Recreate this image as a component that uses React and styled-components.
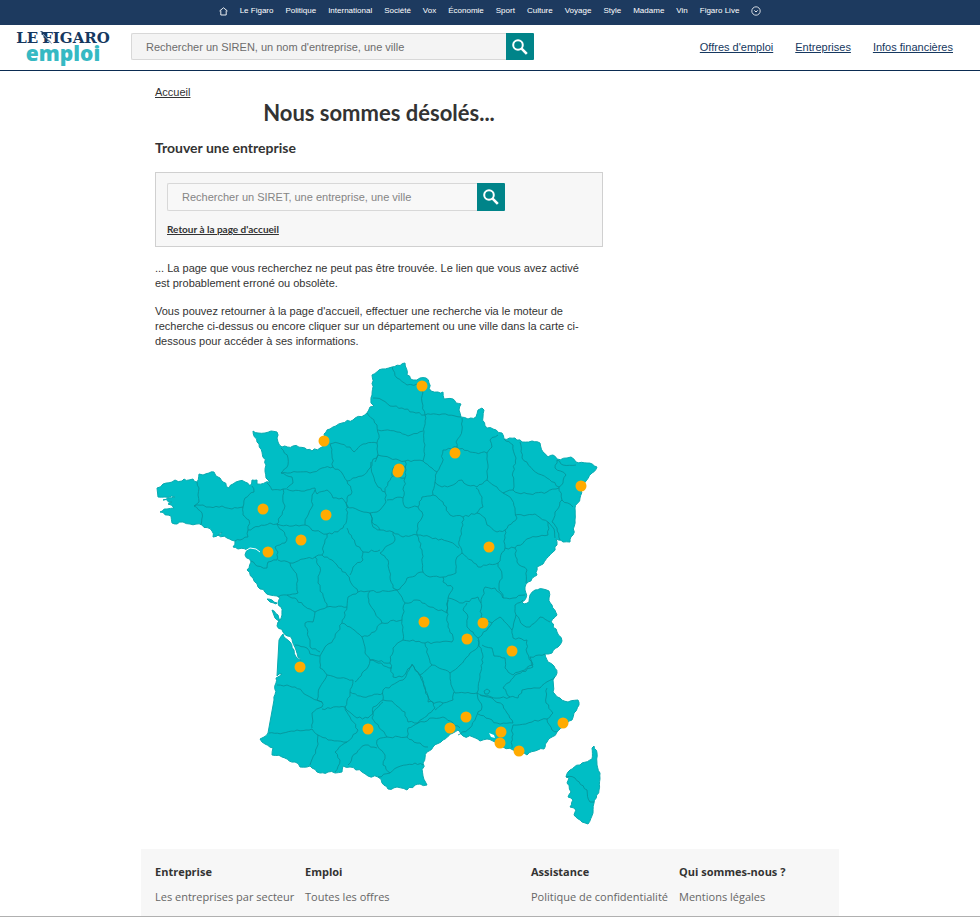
import React, { useState } from "react";
import styled, { createGlobalStyle } from "styled-components";

const GlobalStyle = createGlobalStyle`
  * {
    box-sizing: border-box;
  }

  body {
    margin: 0;
    background: #fff;
    color: #333;
    font-family: "Liberation Sans", Arial, sans-serif;
    font-size: 11px;
    line-height: 15px;
  }

  a {
    color: inherit;
  }
`;

const topLinks = [
  "Le Figaro",
  "Politique",
  "International",
  "Société",
  "Vox",
  "Économie",
  "Sport",
  "Culture",
  "Voyage",
  "Style",
  "Madame",
  "Vin",
  "Figaro Live",
];

const mainLinks = ["Offres d'emploi", "Entreprises", "Infos financières"];

const footerColumns = [
  { title: "Entreprise", link: "Les entreprises par secteur" },
  { title: "Emploi", link: "Toutes les offres" },
  { title: "Assistance", link: "Politique de confidentialité" },
  { title: "Qui sommes-nous ?", link: "Mentions légales" },
];

const mainland =
  "157,488 163,484 172,482 175,480 182,481 184,479 189,480 193,479 197,482 199,474 203,475 209,473 214,472 216,476 220,478 223,482 229,488 233,484 239,481 245,482 250,486 252,480 257,480 257,484 270,482 266,478 266,465 262,452 257,442 253,431 258,433 265,433 271,431 277,432 277,438 278,442 282,447 293,446 305,448 312,451 320,448 324,446 324,434 330,429 342,423 353,420 367,413 370,407 374,406 371,403 372,395 372,375 382,369 392,367 405,363 407,375 413,380 420,378 426,378 429,383 431,391 438,392 443,392 444,399 453,399 456,403 461,404 459,410 461,417 468,419 476,417 478,410 482,408 484,410 483,417 485,426 493,429 502,433 504,439 515,438 522,442 532,441 540,443 543,452 548,457 553,455 557,459 567,458 571,457 576,462 587,463 597,467 592,473 586,481 581,490 580,498 575,508 575,520 573,535 570,542 563,542 556,539 557,545 553,552 543,564 537,567 537,575 528,582 525,590 526,598 522,602 524,604 529,602 530,595 535,590 543,589 549,591 549,598 552,605 557,615 551,622 557,632 562,641 558,647 552,653 545,654 548,662 554,666 557,673 553,680 553,692 560,698 568,702 578,700 579,705 574,713 572,720 563,727 557,732 552,737 547,742 544,749 535,751 527,755 521,753 513,750 503,747 495,742 487,739 480,741 473,737 463,736 458,730 453,733 443,740 433,747 427,752 423,763 423,776 427,785 420,784 415,785 407,790 397,787 388,789 382,783 378,777 368,776 362,772 350,767 343,766 342,772 335,773 328,772 320,773 310,766 300,767 295,762 282,757 272,755 273,748 265,744 260,739 264,737 268,733 274,700 276,683 276,678 282,674 277,676 279,640 283,634 290,642 294,650 296,657 301,661 298,657 296,650 292,639 283,632 277,626 278,622 282,615 281,607 278,603 280,598 270,595 258,587 253,578 247,570 251,562 245,555 247,550 238,549 233,547 235,541 227,538 218,535 222,532 213,537 212,531 202,525 190,524 183,522 177,524 172,523 171,516 160,512 167,509 174,508 168,504 172,502 163,500 168,498 175,497 165,497 158,497";

const islands = [
  "594,746 597,753 597,765 600,773 599,790 594,803 593,813 588,824 582,822 574,815 576,810 570,807 573,800 568,797 571,792 567,783 569,778 566,777 570,770 582,763 592,759 592,748",
  "267,599 272,600 277,603 276,604 270,602",
  "272,610 278,615 280,621 275,618",
];

const borders = [
  "197,482 199,488 198,495 199,502 194,506 202,513 201,525",
  "194,506 203,505 210,507 222,506 232,509 243,507",
  "252,486 254,492 245,498 243,507 243,515 249,520 248,530 248,537 240,540 235,541",
  "267,483 272,490 283,489 283,502 285,506 280,517 277,524",
  "248,530 253,528 270,523 277,524 282,530 287,538 285,543 275,547 278,552 277,560 268,562 267,568 257,566 251,561",
  "277,524 293,526 305,525 315,531 327,534",
  "315,490 312,498 313,505 307,517 305,525",
  "283,489 293,491 307,490 315,488 317,494 327,490 333,498 342,498 347,507",
  "281,448 288,458 288,465 281,473 292,477 293,483 287,488",
  "281,473 297,472 310,473 322,468 333,467",
  "330,444 332,455 333,467 342,473 347,481 362,476 370,468 372,462 378,455",
  "330,444 338,443 350,447 354,452 363,444 377,443",
  "367,413 377,425 379,435 377,443 378,455 375,462",
  "347,481 352,492 347,498 347,518 343,528 332,534 327,534",
  "347,507 358,510 370,513",
  "371,462 373,475 378,487 385,492 386,502 380,510 370,513",
  "385,492 388,482 393,476 405,478 403,498 395,498 387,500",
  "378,455 390,458 405,461 406,470 405,478",
  "392,476 393,468 399,464 406,468",
  "405,461 423,461",
  "378,430 397,432 408,436 423,431",
  "373,398 382,400 390,406 402,408 413,412 425,415",
  "392,367 397,378 407,385 417,384 423,392 422,402 425,415",
  "425,415 442,414 455,416 461,417",
  "425,415 424,432 425,445 423,461 432,468 437,472",
  "462,418 462,430 456,442 457,447 443,450 442,463 437,472 435,482 442,487",
  "457,447 470,452 487,453",
  "498,435 490,440 492,447 487,453 488,465 487,480",
  "442,487 450,486 462,480 467,485 477,487 487,480 497,487 503,493 513,490",
  "504,439 513,445 516,458 513,472 513,490",
  "520,442 522,458 533,470 547,478 559,487",
  "513,490 518,493 530,494 547,492 559,488",
  "557,460 563,465 576,465",
  "557,460 555,468 566,475 563,483 559,487 562,500 573,507",
  "562,500 555,512 552,522 557,528 560,540",
  "403,498 405,507 418,507 422,497 433,495 435,482",
  "433,495 443,502 450,515 463,517 477,513 483,507 482,497 476,488",
  "503,493 512,500 515,508 517,518 505,530 497,532 487,525 485,518 477,513",
  "515,515 527,515 535,514 548,522 554,529 555,538",
  "505,530 505,538 505,548 515,548 530,538 548,535 548,522",
  "463,517 463,525 460,537 459,545 462,553 478,567 498,563 505,548",
  "418,507 423,515 418,523 417,535 430,537 450,542 459,548",
  "370,513 372,522 380,530 393,532 403,537 417,535",
  "393,532 395,540 380,553 388,560 390,577 393,588 397,590",
  "417,535 422,550 423,572 430,577 443,577 456,573 457,557 462,553",
  "423,572 407,578 403,585 397,590 380,592 370,591",
  "397,590 405,603 417,600 430,607 447,613 448,598 453,588 443,582 443,577",
  "448,598 463,603 478,597 481,603 485,587 495,588 503,598 513,598 525,595",
  "481,603 481,617 492,623 482,635 478,638",
  "498,563 502,575 499,587 503,598",
  "515,548 517,562 527,570 526,583",
  "448,600 447,617 448,627 453,637 452,642",
  "467,603 463,610 468,617 467,627 473,632 478,638 478,647",
  "492,623 500,617 512,630 516,615 515,605 523,600",
  "516,615 523,625 530,627 540,617 550,622",
  "512,630 513,638 527,640 527,653 533,665 513,675 505,668 505,658 494,656 492,648 482,645",
  "405,603 402,620 403,627 403,640 413,640 425,643 437,642 452,642",
  "370,591 368,597 370,605 382,623 402,620",
  "382,623 370,635 362,637",
  "403,640 393,648 390,663 393,677 402,677 412,664 420,675 432,665 428,655 425,643",
  "362,637 365,653 370,660 390,663",
  "432,665 450,673 460,665 470,653 478,647",
  "478,640 483,657 480,677 477,693",
  "450,673 452,687 455,693 465,693 477,693",
  "420,675 425,687 428,702 443,703 453,700 454,692",
  "383,690 403,680 412,665 422,677 427,693 435,708 418,723 408,722 405,712 392,701 383,700 383,690",
  "383,700 373,707 372,718 387,737 407,737 408,728 418,723",
  "387,737 377,740 378,747 385,755 383,765 390,773 398,767 415,763 423,765",
  "378,777 390,773",
  "407,737 417,743 428,747",
  "418,723 433,718 443,717 460,728",
  "435,710 443,703",
  "477,693 482,707 477,715 470,728 458,735",
  "480,695 492,698 503,705 507,713 513,723 497,723 478,714",
  "477,693 485,696 500,698 510,697 503,688 515,675",
  "510,697 518,698 522,690 540,688 555,677",
  "515,675 533,667 530,657 545,654",
  "547,688 546,703 553,713 547,719 532,722 513,725 512,737 512,748",
  "547,719 552,730 557,732",
  "277,685 287,685 295,687 312,698 322,702",
  "295,645 307,648 310,654 320,656 320,668 327,675 320,687 317,700 322,702 322,707 312,713 312,728",
  "269,733 283,733 297,730 312,729 318,735 317,747 310,765",
  "318,735 328,740 347,742 335,752 340,760 335,772",
  "322,709 345,707 350,717 358,730 347,742",
  "327,675 337,678 353,680 350,693 345,707",
  "350,692 363,697 383,693",
  "345,707 357,718 368,718 383,702",
  "355,682 368,667 370,660 392,668",
  "348,765 352,757 365,745 377,748",
  "320,656 325,647 333,640 342,623 347,607",
  "278,560 290,563 297,577 298,593 287,595 278,597",
  "290,563 315,557 320,567 318,583 327,607",
  "287,595 295,598 303,605 315,612 327,607",
  "327,534 322,555 315,557",
  "322,555 332,560 337,565 347,575 358,592 348,597 347,607 333,607 327,607",
  "315,612 313,622 305,623 310,640 310,647 320,652",
  "342,623 350,627 362,637",
  "358,592 370,591",
  "347,528 355,543 363,552 363,560 353,567 350,575",
  "363,552 380,550",
  "370,513 373,527 380,530",
  "484,691 487,689 490,691 488,694 485,694 484,691",
  "566,777 575,778 587,790 590,802 594,802",
];

const towns = [
  [422, 386],
  [324, 441],
  [399, 469],
  [398, 472],
  [455, 453],
  [581, 486],
  [263, 509],
  [326, 515],
  [301, 540],
  [268, 552],
  [489, 547],
  [424, 622],
  [483, 623],
  [467, 639],
  [512, 651],
  [300, 667],
  [368, 729],
  [450, 728],
  [466, 717],
  [501, 732],
  [500, 743],
  [519, 751],
  [563, 723],
];

// small zigzag between two points, long straight coasts stay smooth
const roughen = (list, size) => {
  const pts = list.split(" ").map((p) => p.split(",").map(Number));
  let d = "M" + pts[0];
  for (let i = 1; i < pts.length; i++) {
    const [x1, y1] = pts[i - 1];
    const [x2, y2] = pts[i];
    const len = Math.hypot(x2 - x1, y2 - y1);
    const steps = len > 30 ? 1 : Math.max(1, Math.round(len / 3));
    for (let s = 1; s <= steps; s++) {
      const t = s / steps;
      const noise = Math.sin((x1 + s) * 12.9 + (y1 + s) * 78.2) * 43758.5;
      const off = s === steps ? 0 : (noise - Math.floor(noise) - 0.5) * size;
      const x = x1 + (x2 - x1) * t - ((y2 - y1) / len) * off;
      const y = y1 + (y2 - y1) * t + ((x2 - x1) / len) * off;
      d += `L${x.toFixed(1)},${y.toFixed(1)}`;
    }
  }
  return d;
};

const FranceMap = () => (
  <MapSvg viewBox="155 362 448 466" role="img" aria-label="Carte de France">
    <g fill="#00bec5" stroke="#08aab0" strokeWidth="1" strokeLinejoin="round">
      <path d={roughen(mainland, 2.4) + "Z"} />
      {islands.map((shape) => (
        <path key={shape} d={roughen(shape, 1.6) + "Z"} />
      ))}
    </g>
    <path d="M245,551L250,548L256,549L260,552" fill="none" stroke="#fff" />
    <path d="M489,733L494,735L495,738L491,737Z" fill="#fff" />
    <g fill="none" stroke="#078f96" strokeWidth="0.8" strokeLinejoin="round">
      {borders.map((line) => (
        <path key={line} d={roughen(line, 2.2)} />
      ))}
    </g>
    {towns.map(([x, y]) => (
      <circle key={`${x}-${y}`} cx={x} cy={y} r="5.5" fill="#ffab00" />
    ))}
  </MapSvg>
);

const SearchIcon = () => (
  <svg width="18" height="18" viewBox="0 0 18 18" fill="none" stroke="#fff">
    <circle cx="7" cy="7" r="4.8" strokeWidth="2" />
    <path d="M10.6 10.6L15.8 15.8" strokeWidth="2.6" />
  </svg>
);

const HomeIcon = () => (
  <svg width="9" height="9" viewBox="0 0 9 9" fill="none" stroke="#fff">
    <path d="M0.5 4L4.5 0.8L8.5 4M1.8 3.5V8H7.2V3.5" strokeWidth="0.9" />
  </svg>
);

const MoreIcon = () => (
  <svg width="10" height="10" viewBox="0 0 10 10" fill="none" stroke="#fff">
    <circle cx="5" cy="5" r="4.2" strokeWidth="0.8" />
    <path d="M3.4 4.4L5 6L6.6 4.4" strokeWidth="0.9" />
  </svg>
);

const Quill = () => (
  <QuillSvg width="14" height="14" viewBox="0 0 14 14">
    <path
      d="M0 0C3 0 5 2 6 4L5 4L8 7L6.5 7L10 10L12 13L8 10L5 9L6 8L3 6L4 5L1 3L2 2Z"
      fill="#163860"
    />
    <path d="M3 3L11 12" stroke="#fff" strokeWidth="0.5" />
  </QuillSvg>
);

const SearchForm = ({ id, label, $wide }) => {
  const [value, setValue] = useState("");

  return (
    <Search $wide={$wide} onSubmit={(e) => e.preventDefault()}>
      <SearchInput
        id={id}
        type="text"
        aria-label={label}
        placeholder={label}
        value={value}
        $wide={$wide}
        onChange={(e) => setValue(e.target.value)}
      />
      <SearchButton type="submit" aria-label="Rechercher">
        <SearchIcon />
      </SearchButton>
    </Search>
  );
};

const App = () => {
  return (
    <Page>
      <GlobalStyle />
      <TopBar>
        <TopLink href="#" aria-label="Accueil Figaro">
          <HomeIcon />
        </TopLink>
        {topLinks.map((name) => (
          <TopLink href="#" key={name}>
            {name}
          </TopLink>
        ))}
        <MoreButton type="button" aria-label="Plus">
          <MoreIcon />
        </MoreButton>
      </TopBar>

      <Header>
        <Logo href="#">
          <LogoTop>
            <span>LE</span>
            <Quill />
            <span>FIGARO</span>
          </LogoTop>
          <LogoBottom>emploi</LogoBottom>
        </Logo>
        <SearchForm
          id="header-search"
          label="Rechercher un SIREN, un nom d'entreprise, une ville"
          $wide
        />
        <MainNav>
          {mainLinks.map((name) => (
            <a href="#" key={name}>
              {name}
            </a>
          ))}
        </MainNav>
      </Header>

      <Container>
        <Content>
          <Breadcrumb href="#">Accueil</Breadcrumb>
          <Title>Nous sommes désolés...</Title>
          <Subtitle>Trouver une entreprise</Subtitle>
          <SearchPanel>
            <SearchForm
              id="page-search"
              label="Rechercher un SIRET, une entreprise, une ville"
            />
            <BackLink href="#">Retour à la page d'accueil</BackLink>
          </SearchPanel>
          <Text>
            ... La page que vous recherchez ne peut pas être trouvée. Le lien
            que vous avez activé est probablement erroné ou obsolète.
          </Text>
          <Text>
            Vous pouvez retourner à la page d'accueil, effectuer une recherche
            via le moteur de recherche ci-dessus ou encore cliquer sur un
            département ou une ville dans la carte ci-dessous pour accéder à
            ses informations.
          </Text>
          <FranceMap />
        </Content>

        <Footer>
          {footerColumns.map(({ title, link }) => (
            <div key={title}>
              <FooterTitle>{title}</FooterTitle>
              <FooterLink href="#">{link}</FooterLink>
            </div>
          ))}
        </Footer>
      </Container>
    </Page>
  );
};

export default App;

const Page = styled.div`
  border-bottom: 1px solid #b0b0b0;
`;

const TopBar = styled.nav`
  display: flex;
  justify-content: center;
  align-items: center;
  gap: 12px;
  height: 25px;
  padding-bottom: 3px;
  background: #1d3a5f;
  color: #fff;
`;

const TopLink = styled.a`
  display: flex;
  font-size: 8px;
  line-height: 12px;
  text-decoration: none;
`;

const MoreButton = styled.button`
  display: flex;
  padding: 0;
  border: 0;
  background: none;
`;

const Header = styled.header`
  display: flex;
  align-items: center;
  height: 46px;
  padding: 0 27px 2px 16px;
  border-bottom: 1px solid #0b2c52;
`;

const Logo = styled.a`
  display: flex;
  flex-direction: column;
  align-items: center;
  width: 94px;
  margin-right: 21px;
  padding-bottom: 2px;
  text-decoration: none;
`;

const LogoTop = styled.div`
  display: flex;
  position: relative;
  gap: 4px;
  color: #163860;
  font-family: "DejaVu Serif", serif;
  font-size: 15px;
  font-weight: 700;
  line-height: 14px;
`;

const QuillSvg = styled.svg`
  position: absolute;
  left: 24px;
  top: 0;
`;

const LogoBottom = styled.div`
  color: #36b9c3;
  font-family: "Open Sans", sans-serif;
  font-size: 21px;
  font-weight: 800;
  line-height: 16px;
`;

const Search = styled.form`
  display: flex;
  width: ${({ $wide }) => ($wide ? "403px" : "338px")};
  height: ${({ $wide }) => ($wide ? "27px" : "28px")};
`;

const SearchInput = styled.input`
  flex: 1;
  min-width: 0;
  padding: 0 14px;
  border: 1px solid #d8d8d8;
  border-right: 0;
  border-radius: 2px 0 0 2px;
  background: ${({ $wide }) => ($wide ? "#f4f4f4" : "#f8f8f8")};
  font-family: inherit;
  font-size: 11px;

  &::placeholder {
    color: ${({ $wide }) => ($wide ? "#6c6c6c" : "#858585")};
  }
`;

const SearchButton = styled.button`
  display: flex;
  align-items: center;
  justify-content: center;
  width: 28px;
  padding: 0;
  border: 0;
  border-radius: 0 1px 1px 0;
  background: #008489;
`;

const MainNav = styled.nav`
  display: flex;
  gap: 22px;
  margin-left: auto;
  padding-top: 2px;
  color: #163860;
`;

const Container = styled.div`
  max-width: 698px;
  margin: 0 auto;
`;

const Content = styled.main`
  max-width: 476px;
  padding: 14px 14px 21px;
`;

const Breadcrumb = styled.a`
  display: block;
  width: fit-content;
`;

const Title = styled.h1`
  margin: 0;
  font-family: Lato, sans-serif;
  font-size: 22px;
  line-height: 26px;
  text-align: center;
`;

const Subtitle = styled.h2`
  margin: 13px 0 15px;
  font-family: Lato, sans-serif;
  font-size: 14px;
  line-height: 18px;
`;

const SearchPanel = styled.section`
  padding: 10px 11px;
  border: 1px solid #d0d0d0;
  background: #f7f7f7;
`;

const BackLink = styled.a`
  display: block;
  width: fit-content;
  margin-top: 12px;
  font-family: Lato, sans-serif;
  font-size: 10px;
  font-weight: 700;
  line-height: 13px;
`;

const Text = styled.p`
  margin: 14px 0 13px;
  padding-right: 12px;

  & + & {
    margin-top: 0;
  }
`;

const MapSvg = styled.svg`
  display: block;
  width: 100%;
`;

const Footer = styled.footer`
  display: grid;
  grid-template-columns: 150px 226px 148px 1fr;
  padding: 14px 14px 10px;
  background: #f7f7f7;
  font-family: "Open Sans", sans-serif;
  font-size: 11px;
  line-height: 18px;
`;

const FooterTitle = styled.h3`
  margin: 0 0 7px;
  font-size: 11px;
`;

const FooterLink = styled.a`
  display: block;
  color: #666;
  text-decoration: none;
`;
